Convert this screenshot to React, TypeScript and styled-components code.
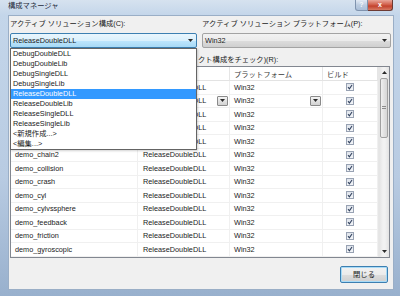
import styled, { createGlobalStyle } from 'styled-components';

const GlobalStyle = createGlobalStyle`
  html, body {
    margin: 0;
    padding: 0;
  }
  body {
    width: 400px;
    height: 296px;
    overflow: hidden;
    font-family: "Liberation Sans", "Noto Sans CJK JP", sans-serif;
    font-size: 7.3px;
    color: #1b1b1b;
  }
`;

// ウィンドウ枠
const Window = styled.div`
  width: 400px;
  height: 296px;
  box-sizing: border-box;
  display: flex;
  flex-direction: column;
  padding: 0 6px 6px 8px;
  background: linear-gradient(180deg, #d6e2ef 0px, #c4d6ea 15px, #b8cbe2 60%, #98b0cd 100%);
`;

const TitleBar = styled.div`
  height: 15px;
  display: flex;
  align-items: flex-start;
  justify-content: space-between;
`;

const TitleText = styled.span`
  line-height: 12px;
  color: #1e2a3a;
`;

const CaptionButtons = styled.div`
  display: flex;
  margin-right: 1px;
`;

const HelpButton = styled.div`
  width: 13px;
  height: 11px;
  box-sizing: border-box;
  border: 1px solid #7f93ae;
  border-top: none;
  border-radius: 0 0 0 3px;
  background: linear-gradient(180deg, #e2eaf4, #bccce0 50%, #aabfd8);
  color: #f4f7fb;
  font-size: 7px;
  font-weight: bold;
  line-height: 10px;
  text-align: center;
`;

const CloseButton = styled.div`
  width: 25px;
  height: 11px;
  box-sizing: border-box;
  border: 1px solid #6d3a33;
  border-top: none;
  border-left: none;
  border-radius: 0 0 3px 0;
  background: linear-gradient(180deg, #e9a699, #cf5a45 50%, #c2412c 60%, #d67a63);
  color: #fff;
  font-size: 7px;
  font-weight: bold;
  line-height: 10px;
  text-align: center;
`;

// クライアント領域
const Client = styled.div`
  flex: 1;
  display: flex;
  flex-direction: column;
  background: #f0f0f0;
  border: 1px solid #9aaec6;
  padding: 3px 2px 0 1px;
`;

const TopRow = styled.div`
  display: grid;
  grid-template-columns: 187px 1fr;
  column-gap: 5px;
`;

const Field = styled.div`
  display: flex;
  flex-direction: column;
  gap: 4px;
`;

const Label = styled.div`
  line-height: 10px;
  white-space: nowrap;
`;

const Combo = styled.div<{ $active?: boolean }>`
  position: relative;
  height: 15px;
  box-sizing: border-box;
  display: flex;
  align-items: center;
  justify-content: space-between;
  padding: 0 3px 0 2px;
  border: 1px solid ${p => (p.$active ? '#3c7fb1' : '#a3a3a3')};
  border-radius: 2px;
  background: ${p =>
    p.$active
      ? 'linear-gradient(180deg, #eaf6fd 0%, #d9f0fc 50%, #bee6fd 51%, #a7d9f5 100%)'
      : 'linear-gradient(180deg, #f2f2f2 0%, #ebebeb 50%, #dddddd 51%, #cfcfcf 100%)'};
`;

const ComboText = styled.span`
  line-height: 13px;
`;

const DropList = styled.div`
  position: absolute;
  top: 14px;
  left: -1px;
  width: 187px;
  box-sizing: border-box;
  border: 1px solid #646464;
  background: #fff;
  box-shadow: 1px 1px 2px rgba(0, 0, 0, 0.18);
  z-index: 10;
`;

const DropItem = styled.div<{ $selected?: boolean }>`
  height: 10px;
  line-height: 10px;
  padding-left: 2px;
  background: ${p => (p.$selected ? '#3399ff' : 'transparent')};
  color: ${p => (p.$selected ? '#fff' : '#1b1b1b')};
  white-space: nowrap;
`;

// ドロップダウンの右に見えている部分だけ
const ProjLabel = styled(Label)`
  margin-top: 7px;
  padding-left: 188px;
`;

// プロジェクト一覧
const Grid = styled.div`
  margin-top: 1px;
  margin-right: 1px;
  display: flex;
  border: 1px solid #828790;
  background: #fff;
`;

const Table = styled.div`
  flex: 1;
  display: grid;
  grid-template-columns: 127px 92px 93px 1fr;
  grid-auto-rows: 13.5px;
  grid-template-rows: 14px;
`;

const HeadCell = styled.div<{ $pad?: number }>`
  box-sizing: border-box;
  display: flex;
  align-items: center;
  padding-left: ${p => p.$pad ?? 4}px;
  border-right: 1px solid #e5e5e5;
  border-bottom: 1px solid #e3e3e3;
  white-space: nowrap;
  color: #3a3a3a;
`;

const Cell = styled.div<{ $pad?: number; $center?: boolean }>`
  box-sizing: border-box;
  display: flex;
  align-items: center;
  justify-content: ${p => (p.$center ? 'center' : 'space-between')};
  padding-left: ${p => p.$pad ?? 4}px;
  padding-right: ${p => (p.$center ? 4 : 1)}px;
  border-right: 1px solid #f0f0f0;
  border-bottom: 1px solid #f0f0f0;
  white-space: nowrap;
  overflow: hidden;
`;

const CellButton = styled.div`
  width: 11px;
  height: 10px;
  box-sizing: border-box;
  display: flex;
  align-items: center;
  justify-content: center;
  border: 1px solid #8a8a8a;
  border-radius: 1px;
  background: linear-gradient(180deg, #f4f4f4, #e2e2e2 50%, #d2d2d2);
  flex-shrink: 0;
`;

const CheckBox = styled.div`
  width: 8px;
  height: 8px;
  box-sizing: border-box;
  display: flex;
  align-items: center;
  justify-content: center;
  border: 1px solid #98a2b3;
  background: linear-gradient(180deg, #dfe4ec, #f3f5f8);
`;

const ScrollBar = styled.div`
  width: 10px;
  display: flex;
  flex-direction: column;
  background: linear-gradient(90deg, #e3e3e3, #f2f2f2 40%, #f2f2f2 60%, #e3e3e3);
  border-left: 1px solid #e6e6e6;
`;

const ScrollArrow = styled.div`
  height: 10px;
  display: flex;
  align-items: center;
  justify-content: center;
`;

const ScrollTrack = styled.div`
  flex: 1;
  padding-top: 1px;
`;

const Thumb = styled.div`
  height: 60px;
  margin: 0 1px;
  box-sizing: border-box;
  display: flex;
  align-items: center;
  justify-content: center;
  border: 1px solid #a0a0a0;
  border-radius: 2px;
  background: linear-gradient(90deg, #f0f0f0, #e2e2e2 50%, #d6d6d6);
`;

const Grip = styled.div`
  width: 4px;
  height: 4px;
  background: repeating-linear-gradient(180deg, #8c8c8c 0 1px, transparent 1px 2px);
`;

const ButtonRow = styled.div`
  display: flex;
  justify-content: flex-end;
  margin-top: 8px;
  padding-right: 3px;
`;

const CloseDialogButton = styled.button`
  width: 48px;
  height: 17px;
  padding: 0;
  font: inherit;
  color: #1b1b1b;
  border: 1px solid #3c7fb1;
  border-radius: 2px;
  box-shadow: inset 0 0 0 1px #a8dbf7;
  background: linear-gradient(180deg, #f2f2f2 0%, #ebebeb 50%, #dddddd 51%, #cfcfcf 100%);
`;

const Arrow = ({ up }: { up?: boolean }) => (
  <svg width="5" height="3" viewBox="0 0 5 3">
    <polygon points={up ? '0,3 5,3 2.5,0' : '0,0 5,0 2.5,3'} fill="#2b2b2b" />
  </svg>
);

const Check = () => (
  <svg width="6" height="6" viewBox="0 0 6 6">
    <path d="M1 3.2 L2.4 4.8 L5 1" stroke="#33435f" strokeWidth="1.1" fill="none" />
  </svg>
);

const configs = [
  'DebugDoubleDLL',
  'DebugDoubleLib',
  'DebugSingleDLL',
  'DebugSingleLib',
  'ReleaseDoubleDLL',
  'ReleaseDoubleLib',
  'ReleaseSingleDLL',
  'ReleaseSingleLib',
  '<新規作成...>',
  '<編集...>',
];

// 先頭の5行はドロップダウンに隠れて名前が見えない
const projects = [
  '',
  '',
  '',
  '',
  '',
  'demo_chain2',
  'demo_collision',
  'demo_crash',
  'demo_cyl',
  'demo_cylvssphere',
  'demo_feedback',
  'demo_friction',
  'demo_gyroscopic',
];

const editingRow = 1;

export default function App() {
  return (
    <>
      <GlobalStyle />
      <Window>
        <TitleBar>
          <TitleText>構成マネージャ</TitleText>
          <CaptionButtons>
            <HelpButton>?</HelpButton>
            <CloseButton>x</CloseButton>
          </CaptionButtons>
        </TitleBar>

        <Client>
          <TopRow>
            <Field>
              <Label>アクティブ ソリューション構成(C):</Label>
              <Combo $active>
                <ComboText>ReleaseDoubleDLL</ComboText>
                <Arrow />
                <DropList>
                  {configs.map(c => (
                    <DropItem key={c} $selected={c === 'ReleaseDoubleDLL'}>
                      {c}
                    </DropItem>
                  ))}
                </DropList>
              </Combo>
            </Field>
            <Field>
              <Label>アクティブ ソリューション プラットフォーム(P):</Label>
              <Combo>
                <ComboText>Win32</ComboText>
                <Arrow />
              </Combo>
            </Field>
          </TopRow>

          <ProjLabel>クト構成をチェック)(R):</ProjLabel>

          <Grid>
            <Table>
              <HeadCell />
              <HeadCell $pad={5} />
              <HeadCell>プラットフォーム</HeadCell>
              <HeadCell>ビルド</HeadCell>
              {projects.map((name, i) => (
                <Row key={i} name={name} editing={i === editingRow} />
              ))}
            </Table>
            <ScrollBar>
              <ScrollArrow>
                <Arrow up />
              </ScrollArrow>
              <ScrollTrack>
                <Thumb>
                  <Grip />
                </Thumb>
              </ScrollTrack>
              <ScrollArrow>
                <Arrow />
              </ScrollArrow>
            </ScrollBar>
          </Grid>

          <ButtonRow>
            <CloseDialogButton>閉じる</CloseDialogButton>
          </ButtonRow>
        </Client>
      </Window>
    </>
  );
}

function Row({ name, editing }: { name: string; editing: boolean }) {
  return (
    <>
      <Cell>{name}</Cell>
      <Cell $pad={5}>
        <span>ReleaseDoubleDLL</span>
        {editing && (
          <CellButton>
            <Arrow />
          </CellButton>
        )}
      </Cell>
      <Cell>
        <span>Win32</span>
        {editing && (
          <CellButton>
            <Arrow />
          </CellButton>
        )}
      </Cell>
      <Cell $center>
        <CheckBox>
          <Check />
        </CheckBox>
      </Cell>
    </>
  );
}
